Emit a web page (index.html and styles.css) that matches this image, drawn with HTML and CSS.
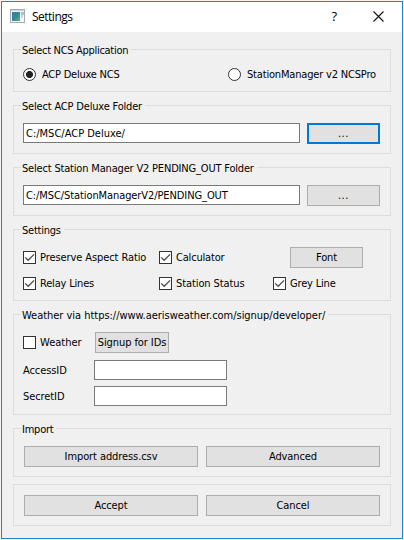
FILE: index.html
```html
<!DOCTYPE html>
<html lang="en">
<head>
<meta charset="utf-8">
<title>Settings</title>
<link rel="stylesheet" href="styles.css">
</head>
<body>
<svg class="defs" width="0" height="0"><defs>
<symbol id="tick" viewBox="0 0 13 13"><path d="M2.2 6.4 5.2 9.3 11 3.4" fill="none" stroke="#4c4c4c" stroke-width="1.3"/></symbol>
<linearGradient id="app" x1="0" y1="0" x2="1" y2="1"><stop offset="0" stop-color="#3f73b8"/><stop offset=".5" stop-color="#2f8a94"/><stop offset="1" stop-color="#62b56a"/></linearGradient>
</defs></svg>
<div class="window">
  <header class="titlebar">
    <svg class="app-icon" width="15" height="14" viewBox="0 0 15 14"><rect x=".5" y=".5" width="14" height="13" fill="#f4f6f8" stroke="#a3acb5"/><path d="M1 1.5h13" stroke="#c9d2da"/><rect x="2" y="3" width="8" height="9" fill="url(#app)"/><rect x="11" y="3" width="3" height="3" fill="#9fc5d8"/><rect x="11" y="6" width="2" height="3" fill="#c5dfd8"/></svg>
    <h1>Settings</h1>
    <span class="help">?</span>
    <svg class="close" width="11" height="11" viewBox="0 0 11 11"><path d="M.5.5l10 10M10.5.5l-10 10" stroke="#111" stroke-width="1.1"/></svg>
  </header>
  <main>
    <section class="group app-group"><h2 class="tightest">Select NCS Application</h2>
      <div class="row"><label class="option first"><i class="radio on"></i><span class="tighter">ACP Deluxe NCS</span></label><label class="option"><i class="radio"></i><span class="tight">StationManager v2 NCSPro</span></label></div>
    </section>
    <section class="group folder"><h2 class="tight">Select ACP Deluxe Folder</h2>
      <div class="row"><div class="input loose">C:/MSC/ACP Deluxe/</div><div class="button focus">...</div></div>
    </section>
    <section class="group folder"><h2 class="tight">Select Station Manager V2 PENDING_OUT Folder</h2>
      <div class="row"><div class="input">C:/MSC/StationManagerV2/PENDING_OUT</div><div class="button">...</div></div>
    </section>
    <section class="group prefs"><h2 class="tighter">Settings</h2>
      <div class="checks">
        <label class="option"><svg class="box"><use href="#tick"/></svg><span>Preserve Aspect Ratio</span></label>
        <label class="option"><svg class="box"><use href="#tick"/></svg><span class="tight">Calculator</span></label>
        <div class="button font">Font</div>
        <label class="option"><svg class="box"><use href="#tick"/></svg><span class="tight">Relay Lines</span></label>
        <label class="option"><svg class="box"><use href="#tick"/></svg><span>Station Status</span></label>
        <label class="option"><svg class="box"><use href="#tick"/></svg><span class="tight">Grey Line</span></label>
      </div>
    </section>
    <section class="group weather"><h2 class="url">Weather via https://www.aerisweather.com/signup/developer/</h2>
      <div class="row"><label class="option"><svg class="box"></svg><span class="loose">Weather</span></label><div class="button signup">Signup for IDs</div></div>
      <div class="row field"><span>AccessID</span><div class="input"></div></div>
      <div class="row field"><span>SecretID</span><div class="input"></div></div>
    </section>
    <section class="group actions import"><h2 class="tighter">Import</h2>
      <div class="row"><div class="button">Import address.csv</div><div class="button">Advanced</div></div>
    </section>
    <section class="group actions confirm">
      <div class="row"><div class="button">Accept</div><div class="button">Cancel</div></div>
    </section>
  </main>
</div>
</body>
</html>
```
FILE: styles.css
```css
* { box-sizing: border-box; }
body { margin: 0; padding: 1px; height: 540px; background: #f7f4f2; overflow: hidden;
  font: 11px/14px "DejaVu Sans Condensed", "DejaVu Sans", sans-serif; letter-spacing: -.09px; color: #000; white-space: nowrap; }
.tight { letter-spacing: -.18px; }
.tighter { letter-spacing: -.23px; }
.tightest { letter-spacing: -.3px; }
.loose { letter-spacing: 0; }
.url { letter-spacing: -.03px; }
.defs { position: absolute; }
.window { width: 402px; height: 538px; border: 1px solid #1883d7; background: #f0f0f0; }
.titlebar { height: 30px; background: #fff; display: flex; align-items: center; padding: 0 18px 2px 8px; }
h1 { margin: 0 0 0 7px; font: 12px/16px "Open Sans", sans-serif; letter-spacing: -.5px; flex: 1; padding-top: 1px; }
.help { font: 13px/16px "Open Sans", sans-serif; margin-right: 36px; }
main { padding: 17px 11px 0; display: flex; flex-direction: column; }
.group { border: 1px solid #dcdcdc; padding: 0 9px; margin-bottom: 13px; }
h2 { margin: -7px 0 0 -2px; padding: 1px 3px 0 1px; width: fit-content; height: 14px; font: inherit; background: #f0f0f0; }
.row { display: flex; align-items: center; }
.app-group { height: 43px; }
.app-group .row { margin-top: 11px; }
.first { width: 205px; }
.option { display: flex; align-items: center; height: 13px; }
.option span, .field span { padding-top: 1px; }
.radio { width: 13px; height: 13px; border: 1px solid #333; border-radius: 50%; background: #fff; margin-right: 6px; flex: none; }
.radio.on { background: radial-gradient(circle, #222 3.1px, #fff 3.9px); }
.box { width: 13px; height: 13px; background: #fff; outline: 1px solid #333; outline-offset: -1px; margin-right: 4px; flex: none; }
.input { height: 20px; border: 1px solid #7a7a7a; background: #fff; padding: 3px 2px 0; }
.button { height: 21px; width: 73px; border: 1px solid #adadad; background: #e1e1e1; text-align: center; line-height: 20px; }
.folder { height: 49px; }
.folder .row { align-items: flex-start; gap: 7px; margin-top: 10px; }
.folder .input { width: 277px; }
.folder .button { letter-spacing: .6px; }
.button.focus { border: 2px solid #0078d7; line-height: 18px; }
.prefs { height: 72px; }
.checks { display: grid; grid-template-columns: 136px 114px 1fr; grid-template-rows: 21px 26px; align-items: center; margin-top: 10px; }
.font { margin-left: 17px; }
.checks .option:nth-child(n+4) { margin-top: 5px; }
.weather { height: 101px; }
.weather .row:nth-child(2) { margin-top: 10px; }
.weather .option { width: 72px; }
.signup { width: 74px; }
.field { margin-top: 7px; }
.field + .field { margin-top: 6px; }
.field span { width: 71px; }
.field .input { width: 133px; }
.actions .row { gap: 8px; padding-left: 1px; }
.actions .button { width: 174px; }
.import { height: 49px; margin-bottom: 7px; }
.import .row { margin-top: 10px; }
.confirm { height: 42px; }
.confirm .row { margin-top: 10px; }
```
